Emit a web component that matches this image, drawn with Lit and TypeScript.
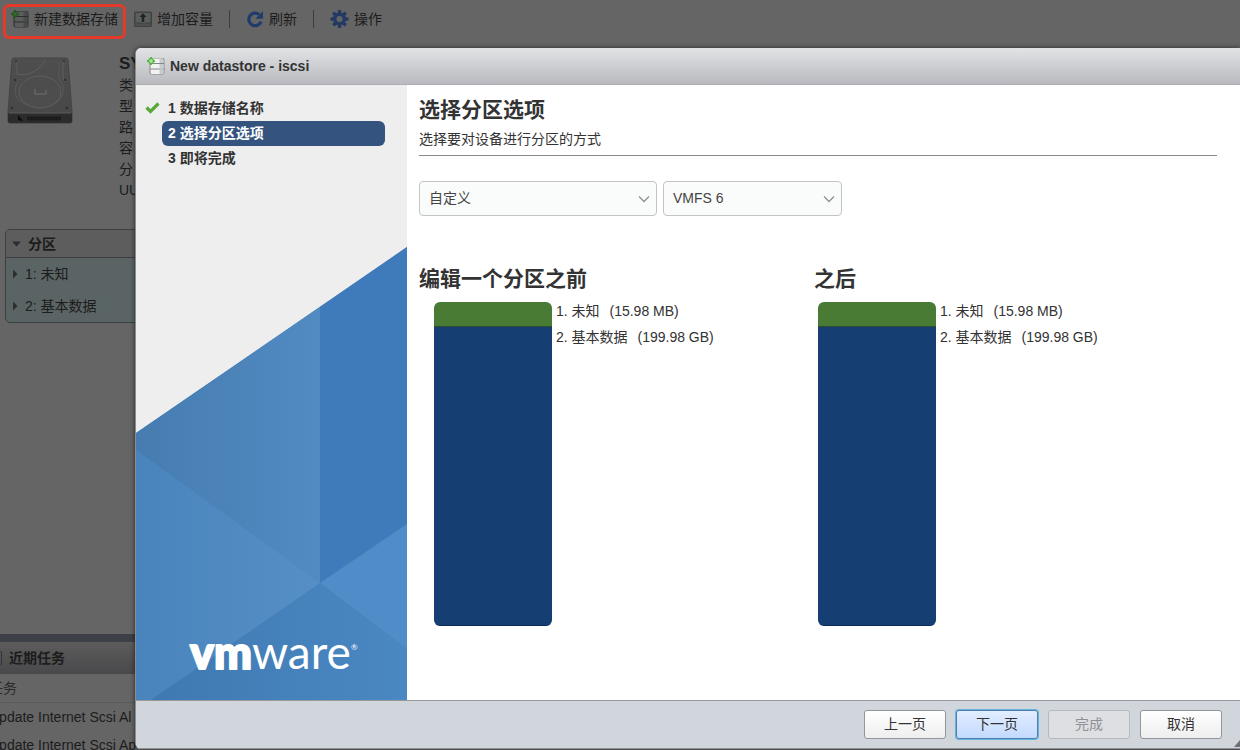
import { LitElement, html, svg, css } from "lit";
import { customElement, property, state } from "lit/decorators.js";

interface Partition {
  name: string;
  size: string;
  color: string;
  share: number;
}

const PARTITIONS: Partition[] = [
  { name: "未知", size: "15.98 MB", color: "#4a7b35", share: 25 },
  { name: "基本数据", size: "199.98 GB", color: "#153e73", share: 299 },
];

const datastoreIcon = (body: string, shade: string, dark: string, plus: string, core: string) => html`
  <svg width="18" height="18" viewBox="0 0 18 18" aria-hidden="true">
    <rect x="2.5" y="1" width="15" height="16.5" rx="2" fill=${dark} />
    <path d="M5 1.5h10q1.5 0 1.5 1.5v3h-13V3q0-1.5 1.5-1.5zM3.5 7h13v4.5h-13zM3.5 12.5h13v3q0 1.5-1.5 1.5H5q-1.5 0-1.5-1.5z" fill=${body} />
    <path d="M12.5 1.5H15q1.5 0 1.5 1.5v3h-4zM12.5 7h4v4.5h-4zM12.5 12.5h4v3q0 1.5-1.5 1.5h-2.500z" fill=${shade} />
    <path d="M4 0l1.600 2.400L8 4L5.600 5.600L4 8L2.400 5.600L0 4l2.400-1.600z" fill=${plus} stroke=${plus} stroke-linejoin="round" />
    <path d="M4 2v4M2 4h4" stroke=${core} stroke-width="1.2" />
  </svg>
`;

const growIcon = html`
  <svg width="18" height="18" viewBox="0 0 18 18" aria-hidden="true">
    <rect x="0" y="1.5" width="18" height="15.5" rx="1.5" fill="#3f4241" />
    <path d="M1.5 3h15v9.500h-15z" fill="#5a5d5c" />
    <path d="M1 13.5h16V16H1z" fill="#4d504f" />
    <path d="M9 2.500l4.500 5h-2.700v5H7.200v-5H4.500z" fill="#222524" stroke="#6d706f" stroke-width=".7" />
  </svg>
`;

const refreshIcon = html`
  <svg width="18" height="18" viewBox="0 0 18 18" aria-hidden="true">
    <path d="M13.2 4.600A6.300 6.300 0 1 0 15 11.600" fill="none" stroke="#203c6b" stroke-width="3.2" />
    <path d="M17 1v7.800H9.400z" fill="#203c6b" />
  </svg>
`;

const gearIcon = html`
  <svg width="19" height="18" viewBox="-9.5 -9 19 18" aria-hidden="true">
    <g fill="#253a63">
      ${[0, 45, 90, 135].map(
        (a) => svg`<rect x="-1.8" y="-9" width="3.6" height="18" rx="1" transform="rotate(${a})" />`
      )}
      <circle r="6.5" />
    </g>
    <circle r="3" fill="#636466" />
  </svg>
`;

@customElement("partition-chart")
export class PartitionChart extends LitElement {
  @property({ attribute: false }) partitions: Partition[] = [];

  static styles = css`
    :host {
      display: flex;
      gap: 4px;
    }
    .bar {
      display: flex;
      flex-direction: column;
      width: 118px;
      height: 324px;
      border-radius: 6px;
      overflow: hidden;
    }
    .part {
      box-shadow: inset 0 -1px rgba(0, 10, 40, 0.4);
    }
    .legend {
      margin: 0;
      padding: 0;
      list-style: none;
      line-height: 26px;
      margin-top: -4px;
    }
    .size {
      margin-left: 6px;
    }
  `;

  render() {
    return html`
      <div class="bar">
        ${this.partitions.map(
          (p) => html`<div class="part" style="flex:${p.share};background:${p.color}"></div>`
        )}
      </div>
      <ol class="legend">
        ${this.partitions.map(
          (p, i) => html`<li>${i + 1}. ${p.name} <span class="size">(${p.size})</span></li>`
        )}
      </ol>
    `;
  }
}

@customElement("wizard-art")
export class WizardArt extends LitElement {
  static styles = css`
    :host,
    .art {
      display: block;
      width: 100%;
    }
    .logo {
      font-family: Lato, "Open Sans", sans-serif;
      fill: #fff;
      stroke: #fff;
      stroke-linejoin: round;
    }
    .bold {
      font-size: 45px;
      font-weight: 900;
      stroke-width: 2px;
    }
    .thin {
      font-size: 46px;
      font-weight: 400;
      stroke-width: 0;
    }
    .mark {
      font-size: 8px;
      stroke-width: 0;
    }
  `;

  render() {
    return html`
      <svg class="art" viewBox="0 0 271 453" role="img" aria-label="vmware">
        <defs>
          <linearGradient id="upper"><stop stop-color="#467cb0" /><stop offset="1" stop-color="#518bc2" /></linearGradient>
          <linearGradient id="left"><stop stop-color="#4a84bc" /><stop offset="1" stop-color="#568fc6" /></linearGradient>
          <linearGradient id="lower"><stop stop-color="#4079b2" /><stop offset="1" stop-color="#4a88c3" /></linearGradient>
        </defs>
        <path d="M0 186L271 0V453H0z" fill="#4883bb" />
        <path d="M0 186L184 60V336L0 203z" fill="url(#upper)" />
        <path d="M0 203L184 336L15 453H0z" fill="url(#left)" />
        <path d="M184 60L271 0V277L184 336z" fill="#3f7aba" />
        <path d="M184 336L271 277V402z" fill="#508cc7" />
        <path d="M184 336L271 402V453H15z" fill="url(#lower)" />
        <text class="logo bold" x="54" y="422">vm</text>
        <text class="logo thin" x="116" y="422">ware</text>
        <text class="logo mark" x="215" y="403">®</text>
      </svg>
    `;
  }
}

@customElement("app-root")
export class AppRoot extends LitElement {
  @state() private step = 2;

  private steps = ["数据存储名称", "选择分区选项", "即将完成"];

  static styles = css`
    :host {
      display: block;
      position: relative;
      height: 100vh;
      overflow: hidden;
      background: #656565;
      color: #1c1c1c;
      font: 14px/20px "Liberation Sans", "Noto Sans CJK SC", sans-serif;
    }
    button,
    select {
      font: inherit;
      color: inherit;
    }
    h1,
    h2,
    h3,
    p,
    ol,
    ul {
      margin: 0;
      padding: 0;
      list-style: none;
    }
    svg {
      display: block;
      flex: none;
    }

    .page {
      display: flex;
      flex-direction: column;
      height: 100%;
    }
    .toolbar {
      display: flex;
      align-items: center;
      gap: 16px;
      height: 37px;
      padding-left: 11px;
    }
    .tool {
      display: flex;
      align-items: center;
      gap: 5px;
      padding: 0;
      border: 0;
      background: none;
      white-space: nowrap;
    }
    .divider {
      width: 1px;
      height: 18px;
      background: #3d3d3d;
    }
    .highlight {
      position: absolute;
      top: 4px;
      left: 3px;
      width: 117px;
      height: 29px;
      border: 3px solid #e33a2a;
      border-radius: 6px;
    }
    .summary {
      display: grid;
      grid-template-columns: 66px 24px;
      gap: 46px;
      padding: 15px 0 0 7px;
      line-height: 21px;
    }
    .summary h3 {
      font-size: 17px;
      line-height: 23px;
    }
    .disk {
      padding-top: 5px;
    }
    .panel {
      margin: 28px 5px 0;
      border: 1px solid #3e3f40;
      border-radius: 5px;
      background: #5b6464;
      overflow: hidden;
    }
    .panel-head {
      display: flex;
      align-items: center;
      gap: 7px;
      height: 27px;
      padding-left: 6px;
      border-bottom: 1px solid #3e3f40;
      background: #5d5d5d;
      font-size: 14px;
    }
    .row {
      display: flex;
      align-items: center;
      gap: 4px;
      height: 32px;
      padding-left: 6px;
    }
    .tasks {
      height: 116px;
      margin-top: auto;
      border-top: 8px solid #3d4049;
      overflow: hidden;
      box-sizing: border-box;
    }
    .tasks-head {
      display: flex;
      align-items: center;
      gap: 7px;
      height: 32px;
      background: linear-gradient(#5c5c5d, #49494b);
      font-size: 14px;
    }
    .collapse {
      width: 2px;
      height: 14px;
      border: solid #333;
      border-width: 1px 1px 1px 0;
      border-radius: 0 4px 4px 0;
      box-sizing: border-box;
    }
    .tasks table {
      width: 100%;
      margin-left: -11px;
      border-collapse: collapse;
    }
    .tasks th,
    .tasks td {
      height: 28px;
      padding: 0;
      text-align: left;
      font-weight: 400;
      white-space: nowrap;
    }
    .tasks th {
      border-bottom: 1px solid #5a5a5a;
      color: #2c2c2c;
    }

    .dialog {
      position: absolute;
      inset: 48px 0 1px 135px;
      display: grid;
      grid-template: 37px 1fr 49px / 271px 1fr;
      border-left: 1px solid #8a8d90;
      border-radius: 6px 0 0 6px;
      background: #fff;
      color: #333;
      overflow: hidden;
      box-shadow: 0 0 5px rgba(0, 0, 0, 0.6);
    }
    .title {
      grid-column: 1 / -1;
      display: flex;
      align-items: center;
      gap: 5px;
      padding-left: 11px;
      border-bottom: 1px solid #adadb1;
      background: linear-gradient(#e2e3e5, #b9babf);
    }
    .title h1 {
      font-size: 14px;
      line-height: 20px;
    }
    .side {
      display: flex;
      flex-direction: column;
      justify-content: space-between;
      min-height: 0;
      background: #eee;
    }
    .steps {
      padding: 11px 22px 0 9px;
      font-weight: 700;
    }
    .step {
      display: grid;
      grid-template-columns: 17px 1fr;
      align-items: center;
      line-height: 25px;
    }
    .step span {
      grid-column: 2;
      padding-left: 6px;
      border-radius: 6px;
    }
    .step svg {
      grid-column: 1;
      grid-row: 1;
    }
    .current span {
      background: #34547f;
      color: #fff;
    }
    .content {
      padding: 10px 23px 0 12px;
    }
    .content h2 {
      font-size: 21px;
      line-height: 30px;
    }
    .intro {
      padding: 4px 0 6px;
      line-height: 20px;
      border-bottom: 1px solid #888;
    }
    .fields {
      display: flex;
      gap: 6px;
      padding: 25px 0 48px;
    }
    .field {
      display: grid;
      align-items: center;
      width: 238px;
    }
    .field.narrow {
      width: 179px;
    }
    .field > * {
      grid-area: 1 / 1;
    }
    .field svg {
      justify-self: end;
      margin-right: 7px;
      pointer-events: none;
    }
    select {
      appearance: none;
      width: 100%;
      height: 35px;
      padding: 0 9px 2px;
      border: 1px solid #c4c4c4;
      border-radius: 4px;
      background: #fafbfb;
      color: #444;
    }
    .headings {
      display: grid;
      grid-template-columns: 395fr 403fr;
    }
    .charts {
      display: grid;
      grid-template-columns: 384fr 399fr;
      padding: 8px 0 0 15px;
    }
    .footer {
      grid-column: 1 / -1;
      display: flex;
      justify-content: flex-end;
      align-items: center;
      gap: 10px;
      padding-right: 18px;
      border-top: 1px solid #95999c;
      border-bottom: 1px solid #8b9197;
      background: #d1d6dc;
    }
    .btn {
      width: 82px;
      height: 29px;
      padding: 0 0 2px;
      border: 1px solid #92979c;
      border-radius: 3px;
      background: linear-gradient(#fff, #eee);
    }
    .btn.primary {
      border-color: #4e7fae;
      background: linear-gradient(#e2edff, #c3daff);
      box-shadow: 0 0 0 1px #62b4df;
    }
    .btn:disabled {
      border-color: #b6babf;
      background: #dddfe2;
      color: #8e9093;
    }
    .grip {
      position: absolute;
      right: 0;
      bottom: 2px;
    }
  `;

  private chevron() {
    return html`<svg width="12" height="8" viewBox="0 0 12 8" aria-hidden="true">
      <path d="M1 1.5L6 6.5L11 1.5" fill="none" stroke="#8f8f8f" stroke-width="1.3" />
    </svg>`;
  }

  private arrow(open: boolean) {
    return html`<svg width="9" height="10" viewBox="0 0 9 10" aria-hidden="true">
      <path d=${open ? "M0 2.5h9L4.5 7.5z" : "M1 .5v9L5.5 5z"} fill="#2d2d2d" />
    </svg>`;
  }

  private renderDisk() {
    return html`<svg width="66" height="68" viewBox="0 0 66 68" aria-hidden="true">
      <defs>
        <linearGradient id="metal" x2="0" y2="1">
          <stop stop-color="#4e4e4e" /><stop offset="1" stop-color="#474747" />
        </linearGradient>
      </defs>
      <path d="M7 1h52q2 0 2 2l4 52v9q0 2-2 2H3q-2 0-2-2v-9L5 3q0-2 2-2z" fill="url(#metal)" stroke="#444" />
      <path d="M1 56h64v8q0 2-2 2H3q-2 0-2-2z" fill="#2c2c2c" />
      <path d="M2 56h62" stroke="#5c5c5c" />
      <path d="M11 58v5l5 1z" fill="#0c0c0c" />
      <path d="M20 61.5h34" stroke="#1c1c1c" stroke-width="4" />
      <path d="M10 5v12q10 2 18-3t10-11M56 5v14q0 3 2 6" fill="none" stroke="#5f5f5f" />
      <path d="M12 22q-10 18 6 25q16 7 31-1q13-10 3-24V5" fill="none" stroke="#595959" />
      <ellipse cx="33" cy="35" rx="21" ry="16" fill="#4d4d4d" stroke="#5e5e5e" />
      <path d="M28 32v5h11v-4" fill="none" stroke="#646464" stroke-width="1.5" />
      <g fill="#303030">
        <circle cx="9" cy="4" r="1" /><circle cx="57" cy="4" r="1" /><circle cx="8" cy="23" r="1.2" />
        <circle cx="58" cy="23" r="1.2" /><circle cx="5" cy="51" r="1.2" /><circle cx="60" cy="51" r="1.2" />
      </g>
    </svg>`;
  }

  private renderPage() {
    return html`
      <div class="page">
        <div class="toolbar">
          <button class="tool">${datastoreIcon("#5b5d5d", "#4a4c4c", "#2c2e2e", "#2a5722", "#366f2b")}新建数据存储</button>
          <button class="tool">${growIcon}增加容量</button>
          <span class="divider"></span>
          <button class="tool">${refreshIcon}刷新</button>
          <span class="divider"></span>
          <button class="tool">${gearIcon}操作</button>
        </div>
        <div class="highlight"></div>
        <section class="summary">
          <div class="disk">${this.renderDisk()}</div>
          <div>
            <h3>SY</h3>
            ${["类", "型", "路", "容", "分", "UU"].map((t) => html`<div>${t}</div>`)}
          </div>
        </section>
        <section class="panel">
          <h3 class="panel-head">${this.arrow(true)}分区</h3>
          ${PARTITIONS.map(
            (p, i) => html`<div class="row">${this.arrow(false)}${i + 1}: ${p.name}</div>`
          )}
        </section>
        <section class="tasks">
          <h3 class="tasks-head"><span class="collapse"></span>近期任务</h3>
          <table>
            <thead><tr><th>任务</th></tr></thead>
            <tbody>
              <tr><td>Update Internet Scsi Al</td></tr>
              <tr><td>Update Internet Scsi Ap</td></tr>
            </tbody>
          </table>
        </section>
      </div>
    `;
  }

  render() {
    return html`
      ${this.renderPage()}
      <section class="dialog" role="dialog" aria-labelledby="title">
        <header class="title">
          ${datastoreIcon("#f2f2f2", "#c9cbcc", "#85888a", "#4fb53a", "#c4f0b4")}
          <h1 id="title">New datastore - iscsi</h1>
        </header>
        <aside class="side">
          <ol class="steps">
            ${this.steps.map(
              (name, i) => html`<li class="step ${i + 1 === this.step ? "current" : ""}">
                ${i + 1 < this.step
                  ? html`<svg width="15" height="14" viewBox="0 0 15 14" aria-hidden="true">
                      <path d="M1.500 5.500L5.500 9.500L13.500 1.500" fill="none" stroke="#58a83a" stroke-width="3.2" />
                    </svg>`
                  : ""}
                <span>${i + 1} ${name}</span>
              </li>`
            )}
          </ol>
          <wizard-art></wizard-art>
        </aside>
        <main class="content">
          <h2>选择分区选项</h2>
          <p class="intro">选择要对设备进行分区的方式</p>
          <div class="fields">
            <label class="field">
              <select aria-label="自定义"><option>自定义</option></select>${this.chevron()}
            </label>
            <label class="field narrow">
              <select aria-label="VMFS 6"><option>VMFS 6</option></select>${this.chevron()}
            </label>
          </div>
          <div class="headings">
            <h2>编辑一个分区之前</h2>
            <h2>之后</h2>
          </div>
          <div class="charts">
            <partition-chart .partitions=${PARTITIONS}></partition-chart>
            <partition-chart .partitions=${PARTITIONS}></partition-chart>
          </div>
        </main>
        <footer class="footer">
          <button class="btn">上一页</button>
          <button class="btn primary">下一页</button>
          <button class="btn" disabled>完成</button>
          <button class="btn">取消</button>
          <svg class="grip" width="6" height="7" viewBox="0 0 6 7" aria-hidden="true">
            <path d="M6 0v7H0z" fill="#6d7176" />
          </svg>
        </footer>
      </section>
    `;
  }
}
